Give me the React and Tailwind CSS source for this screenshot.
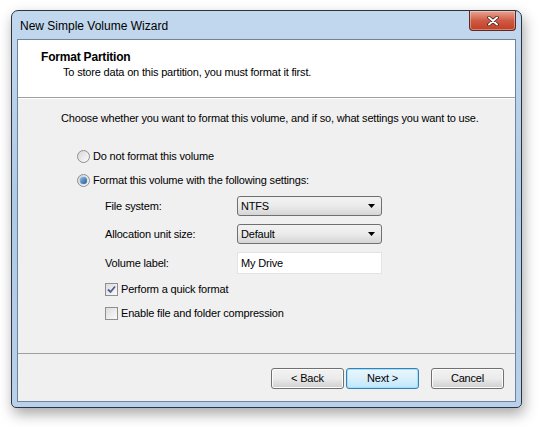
import React from 'react';

const font = { fontFamily: '"Liberation Sans", Arial, sans-serif' };

function Radio({ checked }) {
  return (
    <span className="relative flex h-[13px] w-[13px] shrink-0 items-center justify-center rounded-full border border-[#8f8f8f] bg-gradient-to-br from-[#d8d8d8] to-[#fbfbfb]">
      {checked && (
        <span className="h-[7px] w-[7px] rounded-full bg-gradient-to-br from-[#8ec0ea] to-[#1e5a9c] shadow-[0_0_1px_#2b5d8f]" />
      )}
    </span>
  );
}

function Check({ checked }) {
  return (
    <span className="flex h-[13px] w-[13px] shrink-0 items-center justify-center border border-[#8f8f8f] bg-gradient-to-br from-[#dcdcdc] to-[#fafafa]">
      {checked && (
        <svg width="9" height="9" viewBox="0 0 9 9">
          <path d="M1 4.5 L3.5 7 L8 1.5" fill="none" stroke="#4a5f97" strokeWidth="1.8" />
        </svg>
      )}
    </span>
  );
}

function Combo({ value }) {
  return (
    <div className="flex h-[20px] w-[145px] items-center justify-between rounded-[3px] border border-[#707070] bg-gradient-to-b from-[#f2f2f2] via-[#ebebeb] to-[#d5d5d5] pl-[3px] pr-[6px]">
      <span className="text-black">{value}</span>
      <svg width="7" height="4" viewBox="0 0 7 4">
        <path d="M0 0 H7 L3.5 4 Z" fill="#000" />
      </svg>
    </div>
  );
}

function Button({ children, focused }) {
  return (
    <div
      className={`flex h-[21px] w-[73px] shrink-0 items-center justify-center rounded-[3px] border text-black ${
        focused
          ? 'border-[#3c7fb1] bg-gradient-to-b from-[#eaf6fd] via-[#d9f0fc] to-[#bee6fd] shadow-[inset_0_0_0_1px_#9fe1fb]'
          : 'border-[#707070] bg-gradient-to-b from-[#f2f2f2] via-[#ebebeb] to-[#cfcfcf] shadow-[inset_0_0_0_1px_#fcfcfc]'
      }`}
    >
      {children}
    </div>
  );
}

export default function App() {
  return (
    <div className="h-[427px] w-[541px] overflow-hidden bg-white pl-[11px] pt-[10px] text-[11px] tracking-[-0.18px]" style={font}>
      <div className="flex h-[398px] w-[511px] flex-col rounded-t-[7px] rounded-b-[5px] border border-[#2c3440] bg-gradient-to-b from-[#c2d8ee] via-[#aecae7] to-[#b9d1ea] shadow-[2px_6px_14px_rgba(0,0,0,0.35)]">
        <div className="flex h-[28px] items-start justify-between pl-[8px] pr-[5px]">
          <span className="pt-[6px] text-[12px] tracking-normal text-black">New Simple Volume Wizard</span>
          <div className="flex h-[20px] w-[47px] items-center justify-center rounded-b-[4px] border border-t-0 border-[#5a2a24] bg-gradient-to-b from-[#e8a493] via-[#cf5b44] to-[#c23d22] shadow-[inset_0_0_0_1px_rgba(255,255,255,0.35)]">
            <svg width="12" height="10" viewBox="0 0 12 10">
              <path d="M2 1.5 L10 8.5 M10 1.5 L2 8.5" stroke="#3a1710" strokeWidth="3.4" strokeLinecap="round" />
              <path d="M2 1.5 L10 8.5 M10 1.5 L2 8.5" stroke="#fff" strokeWidth="2" strokeLinecap="round" />
            </svg>
          </div>
        </div>
        <div className="mx-[5px] flex h-[363px] flex-col border border-[#6f849c] bg-[#f0f0f0]">
          <div className="h-[58px] border-b border-[#a0a0a0] bg-white pl-[23px] pt-[10px]">
            <div className="text-[12px] font-bold leading-[15px] tracking-[-0.2px] text-black">Format Partition</div>
            <div className="pl-[22px] leading-[15px] text-black">
              To store data on this partition, you must format it first.
            </div>
          </div>
          <div className="flex flex-1 flex-col border-t border-white pl-[43px] text-black">
            <div className="pt-[12px] leading-[15px]">
              Choose whether you want to format this volume, and if so, what settings you want to use.
            </div>
            <div className="mt-[23px] flex items-center gap-[3px] pl-[16px] leading-[15px]">
              <Radio />
              <span>Do not format this volume</span>
            </div>
            <div className="mt-[9px] flex items-center gap-[3px] pl-[16px] leading-[15px]">
              <Radio checked />
              <span>Format this volume with the following settings:</span>
            </div>
            <div className="mt-[8px] grid grid-cols-[132px_145px] items-center gap-y-[8px] pl-[44px]">
              <span>File system:</span>
              <Combo value="NTFS" />
              <span>Allocation unit size:</span>
              <Combo value="Default" />
              <span>Volume label:</span>
              <div className="flex h-[22px] items-center border border-[#e3e3e3] bg-white pl-[3px]">My Drive</div>
            </div>
            <div className="mt-[8px] flex items-center gap-[3px] pl-[44px] leading-[15px]">
              <Check checked />
              <span>Perform a quick format</span>
            </div>
            <div className="mt-[9px] flex items-center gap-[3px] pl-[44px] leading-[15px]">
              <Check />
              <span>Enable file and folder compression</span>
            </div>
          </div>
          <div className="flex h-[48px] items-start justify-end gap-[2px] border-t border-[#a0a0a0] pr-[11px] pt-[14px]">
            <Button>&lt; Back</Button>
            <Button focused>Next &gt;</Button>
            <div className="w-[8px] shrink-0" />
            <Button>Cancel</Button>
          </div>
        </div>
      </div>
    </div>
  );
}
